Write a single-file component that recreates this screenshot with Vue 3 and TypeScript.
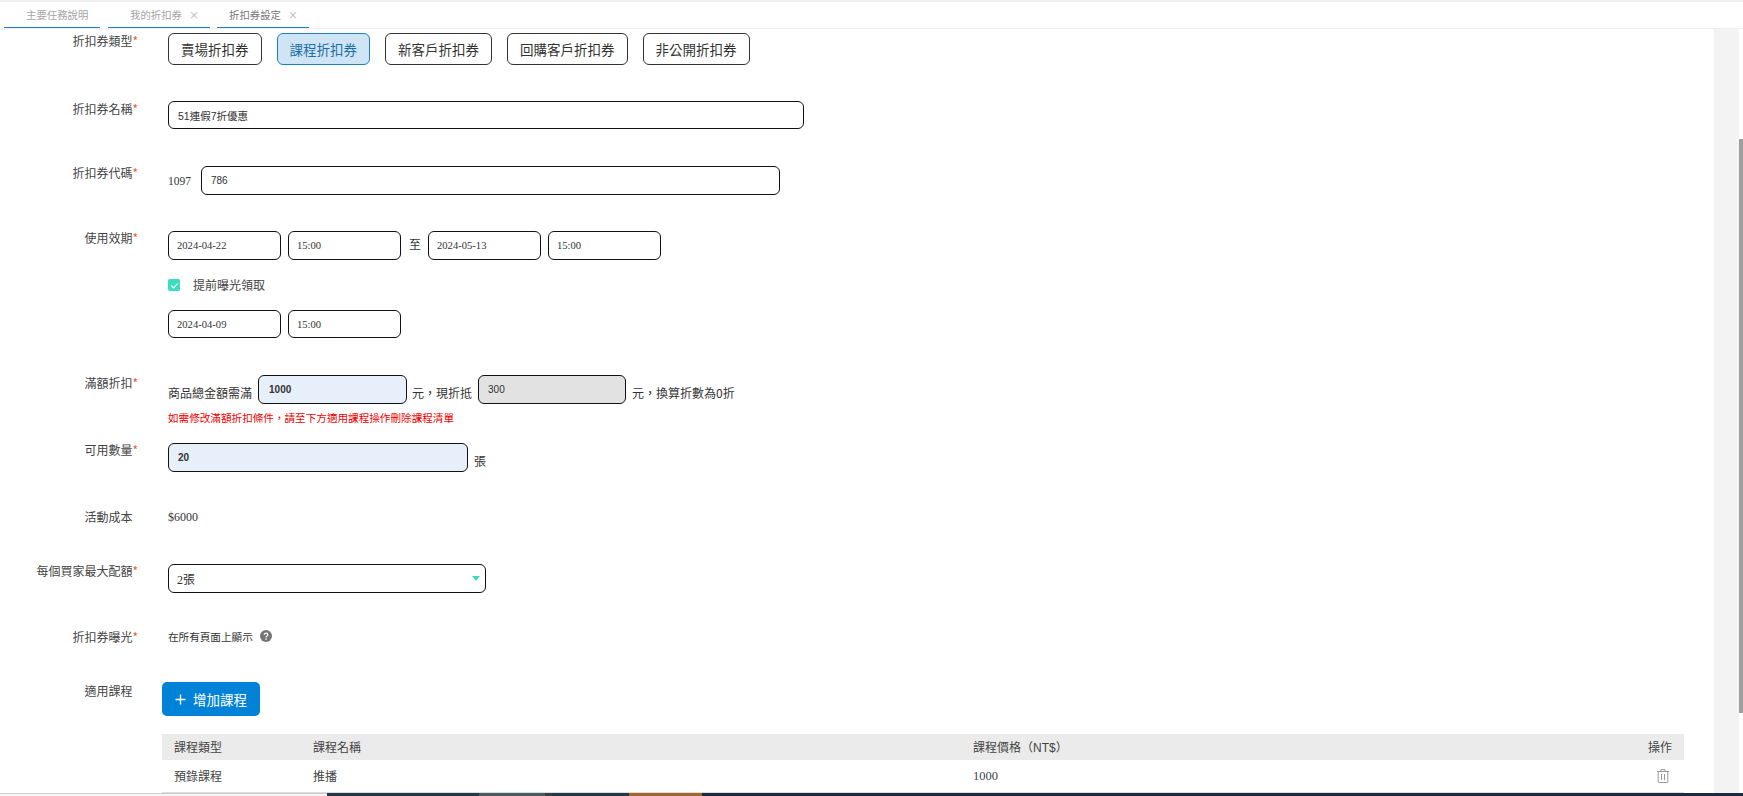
<script setup lang="ts">
const kinds = ['賣場折扣券', '課程折扣券', '新客戶折扣券', '回購客戶折扣券', '非公開折扣券']
const tabs = [
  { name: '主要任務說明', close: false, dark: false },
  { name: '我的折扣券', close: true, dark: false },
  { name: '折扣券設定', close: true, dark: true },
]
</script>

<template>
  <div class="page">
    <nav class="tabs">
      <div v-for="t in tabs" :key="t.name" class="tab" :class="{ dark: t.dark }">
        <span>{{ t.name }}</span><span v-if="t.close" class="x">×</span>
      </div>
    </nav>
    <div class="body">
      <main class="form">
        <section class="row r-kind">
          <label class="lab nudge">折扣券類型<i>*</i></label>
          <div class="kinds">
            <button v-for="(k, i) in kinds" :key="k" class="kind" :class="{ on: i === 1 }">{{ k }}</button>
          </div>
        </section>
        <section class="row r-name">
          <label class="lab nudge">折扣券名稱<i>*</i></label>
          <div class="box w-name sans">51連假7折優惠</div>
        </section>
        <section class="row r-code">
          <label class="lab">折扣券代碼<i>*</i></label>
          <div class="inline"><span class="pre">1097</span><div class="box w-code num">786</div></div>
        </section>
        <section class="row r-date">
          <label class="lab">使用效期<i>*</i></label>
          <div class="stack">
            <div class="inline g7">
              <div class="box w-d">2024-04-22</div><div class="box w-d">15:00</div>
              <span class="to">至</span>
              <div class="box w-d">2024-05-13</div><div class="box w-d">15:00</div>
            </div>
            <div class="check">
              <span class="cb"><svg width="9" height="9" viewBox="0 0 10 10"><path d="M1.5 5.2 4 7.6 8.6 2.6" fill="none" stroke="#fff" stroke-width="1.3"/></svg></span>
              <span class="check-text">提前曝光領取</span>
            </div>
            <div class="inline g7">
              <div class="box w-d h28">2024-04-09</div><div class="box w-d h28">15:00</div>
            </div>
          </div>
        </section>
        <section class="row r-full">
          <label class="lab nudge">滿額折扣<i>*</i></label>
          <div>
            <div class="inline amount">
              <span>商品總金額需滿</span>
              <div class="box w-a blue strong">1000</div>
              <span>元，現折抵</span>
              <div class="box w-b gray num">300</div>
              <span>元，換算折數為0折</span>
            </div>
            <p class="warn">如需修改滿額折扣條件，請至下方適用課程操作刪除課程清單</p>
          </div>
        </section>
        <section class="row r-qty">
          <label class="lab">可用數量<i>*</i></label>
          <div class="inline qty"><div class="box w-q blue strong">20</div><span class="unit">張</span></div>
        </section>
        <section class="row r-cost">
          <label class="lab">活動成本<i class="ghost">*</i></label>
          <div class="plain">$6000</div>
        </section>
        <section class="row r-max">
          <label class="lab">每個買家最大配額<i>*</i></label>
          <div class="box w-s select">2張<span class="caret"></span></div>
        </section>
        <section class="row r-exp">
          <label class="lab">折扣券曝光<i>*</i></label>
          <div class="inline expo">
            <span>在所有頁面上顯示</span>
            <svg width="12" height="12" viewBox="0 0 13 13"><circle cx="6.5" cy="6.5" r="6.5" fill="#757575"/><path d="M4.6 5.1c0-1.1.8-1.8 1.9-1.8s2 .7 2 1.7c0 1.5-1.9 1.5-1.9 3" fill="none" stroke="#fff" stroke-width="1.3"/><circle cx="6.6" cy="9.8" r=".9" fill="#fff"/></svg>
          </div>
        </section>
        <section class="row r-course">
          <label class="lab nudge2">適用課程<i class="ghost">*</i></label>
          <button class="add"><svg width="11" height="11" viewBox="0 0 11 11"><path d="M5.5 0.5v10M.5 5.5h10" stroke="#fff" stroke-width="1.4"/></svg>增加課程</button>
        </section>
        <table class="tbl">
          <thead>
            <tr><th class="c1">課程類型</th><th class="c2">課程名稱</th><th class="c3">課程價格（<span class="nt">NT$</span>）</th><th class="c4">操作</th></tr>
          </thead>
          <tbody>
            <tr>
              <td class="c1">預錄課程</td><td class="c2">推播</td><td class="c3 price">1000</td>
              <td class="c4"><svg class="trash" width="12" height="14" viewBox="0 0 12 14" fill="none" stroke="#999"><path d="M0 2.5h12M4 2.5V.6h4v1.9M1.2 2.5v10.2c0 .5.3.8.8.8h8c.5 0 .8-.3.8-.8V2.5M4.5 5v6M7.5 5v6"/></svg></td>
            </tr>
          </tbody>
        </table>
      </main>
      <aside class="rail"></aside>
      <div class="track"><div class="thumb"></div></div>
    </div>
    <footer class="foot">
      <div class="f-light"></div>
      <div class="f-seg s1"></div><div class="f-seg s2"></div><div class="f-seg s3"></div><div class="f-seg s4"></div><div class="f-seg s5"></div>
    </footer>
  </div>
</template>

<style>
html, body { margin: 0; overflow: hidden; background: #fff; }
</style>

<style scoped>
.page { position: relative; width: 1743px; height: 796px; display: flex; flex-direction: column; font: 12px "Liberation Serif", "Noto Sans CJK TC", serif; color: #333; overflow: hidden; }
.tabs { flex: none; height: 26px; margin-top: 2px; padding-left: 4px; display: flex; gap: 8px; border-bottom: 1px solid #efefef; box-shadow: 0 -2px 0 #f0f0f0; }
.tab { height: 26px; box-sizing: border-box; border-bottom: 1px solid #1f7fbd; padding: 0 0 0 23px; display: flex; align-items: center; gap: 7px; color: #a5a5a5; font-size: 10.4px; font-family: "Noto Sans CJK TC", sans-serif; }
.tab:nth-child(1) { width: 96px; padding-left: 22px; }
.tab:nth-child(2) { width: 102px; padding-left: 22px; }
.tab:nth-child(3) { width: 92px; padding-left: 12px; margin-left: -1px; color: #777; }
.tab .x { color: #b0b0b0; font-size: 10px; }
.body { flex: 1; min-height: 0; display: flex; position: relative; }
.form { width: 1684px; flex: none; }
.rail { width: 25px; margin-left: 30px; background: #f3f3f3; flex: none; }
.track { width: 4px; position: relative; flex: none; }
.thumb { position: absolute; left: 0; right: 0; top: 110px; height: 574px; background: #9e9e9e; }
.row { display: flex; }
.lab { width: 138px; flex: none; text-align: right; font-size: 12px; font-family: "Noto Sans CJK TC", sans-serif; color: #444; margin-right: 30px; line-height: 14px; }
.nudge { padding-top: 1px; }
.nudge2 { padding-top: 2px; }
.lab i { color: #e8602c; font-style: normal; }
.lab i.ghost { visibility: hidden; }
.r-kind { height: 68px; padding-top: 4px; }
.r-name { height: 65px; }
.r-code { height: 65px; }
.r-date { height: 144px; }
.r-full { height: 68px; }
.r-qty { height: 67px; }
.r-cost { height: 54px; }
.r-max { height: 65px; }
.r-exp { height: 53px; }
.r-course { height: 52px; }
.r-exp .lab { padding-top: 1px; }
.r-course .lab { margin-right: 24px; }
.kinds { display: flex; gap: 15px; }
.kind { height: 32px; padding: 0 12px; border: 1px solid #333; border-radius: 6px; background: #fff; font: 13.5px "Noto Sans CJK TC", sans-serif; color: #333; box-sizing: border-box; }
.kind.on { background: #cfe5f5; border-color: #1f7fbd; color: #1f6fa5; }
.box { height: 29px; box-sizing: border-box; border: 1px solid #111; border-radius: 6px; padding-left: 8px; display: flex; align-items: center; background: #fff; font-size: 10.6px; color: #333; font-family: "Liberation Serif", "Noto Sans CJK TC", serif; }
.sans { font: 10.5px "Liberation Sans", "Noto Sans CJK TC", sans-serif; padding-left: 9px; height: 28px; }
.num { font: 10px "Liberation Sans", sans-serif; padding-left: 9px; }
.h28 { height: 28px; }
.inline { display: flex; align-items: center; align-self: flex-start; }
.stack { display: flex; flex-direction: column; }
.g7 { gap: 7px; }
.pre { width: 33px; font-size: 11.5px; margin-top: 1px; }
.w-name { width: 636px; }
.w-code { width: 579px; }
.w-d { width: 113px; }
.to { width: 13px; margin: -4px -1px 0 1px; font: 12px "Noto Sans CJK TC", sans-serif; }
.check { display: flex; align-items: center; height: 50px; gap: 13px; font: 12px "Noto Sans CJK TC", sans-serif; color: #444; }
.check-text { margin-top: -2px; }
.cb { width: 12px; height: 12px; background: #3ddcc0; border-radius: 2px; display: flex; align-items: center; justify-content: center; }
.amount { font-size: 12px; }
.amount > span { margin-top: 6px; font-family: "Noto Sans CJK TC", sans-serif; }
.w-a { width: 149px; margin: 0 5px 0 6px; padding-left: 10px; }
.w-b { width: 148px; margin: 0 6px 0 6px; }
.blue { background: #e7effb; }
.strong { font: 700 10px "Liberation Sans", sans-serif; padding-left: 9px; }
.w-a.strong { padding-left: 10px; }
.gray { background: #e2e2e2; }
.warn { margin: 6px 0 0; color: #f00000; font: 10.6px "Noto Sans CJK TC", sans-serif; }
.w-q { width: 300px; height: 29px; }
.unit { margin: 6px 0 0 6px; font-family: "Noto Sans CJK TC", sans-serif; }
.plain { font-size: 12px; line-height: 14px; }
.w-s { width: 318px; position: relative; font-size: 12px; }
.caret { position: absolute; right: 5px; top: 11px; border: 4px solid transparent; border-top: 5px solid #3ddcc0; border-bottom: 0; }
.expo { gap: 7px; height: 14px; font: 10.6px "Noto Sans CJK TC", sans-serif; }
.add { width: 98px; height: 34px; border: 0; border-radius: 5px; background: #0083d6; color: #fff; font: 13.5px "Noto Sans CJK TC", sans-serif; display: flex; align-items: center; justify-content: center; gap: 7px; padding: 0; }
.tbl { margin-left: 162px; width: 1522px; border-collapse: collapse; font: 12px "Liberation Serif", "Noto Sans CJK TC", serif; color: #444; table-layout: fixed; }
.tbl th { background: #ebebeb; height: 26px; font-weight: 400; text-align: left; padding: 0; }
.tbl td { height: 32px; padding: 0; border-bottom: 1px solid #ddd; }
.c1 { width: 151px; padding-left: 12px !important; box-sizing: border-box; }
.c2 { width: 660px; }
.nt { font-family: "Liberation Sans", sans-serif; }
.price { font-size: 12.5px; }
.tbl .c4 { width: 80px; text-align: right; padding-right: 12px; box-sizing: border-box; }
.trash { display: block; margin: 0 3px 0 auto; }
.foot { position: absolute; left: 0; right: 0; top: 793px; height: 3px; display: flex; background: #1c2b3d; }
.f-light { width: 327px; background: #f6f6f6; border-top: 1px solid #ccc; box-sizing: border-box; }
.f-seg { height: 3px; }
.s1 { width: 152px; background: #243744; }
.s2 { width: 66px; background: #4b5a60; }
.s3 { width: 7px; background: #333f47; }
.s4 { width: 77px; background: #243744; }
.s5 { width: 73px; background: #a26631; }
</style>
